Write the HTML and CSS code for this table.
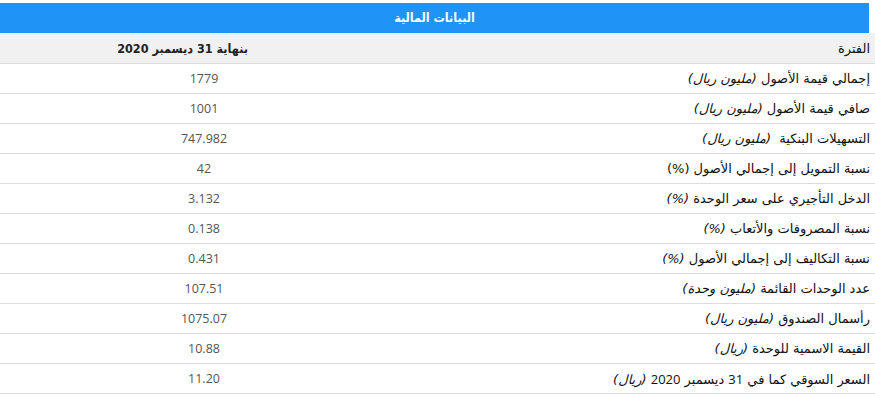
FILE: index.html
```html
<!DOCTYPE html>
<html lang="ar" dir="rtl">
<head>
<meta charset="utf-8">
<title>البيانات المالية</title>
<link rel="stylesheet" href="styles.css">
</head>
<body>
<div class="panel">
  <div class="title">البيانات المالية</div>
  <div class="table">
    <div class="row head"><div class="label">الفترة</div><div class="value head-value">بنهاية 31 ديسمبر 2020</div></div>
    <div class="row"><div class="label">إجمالي قيمة الأصول <i>(مليون ريال)</i></div><div class="value">1779</div></div>
    <div class="row"><div class="label">صافي قيمة الأصول <i>(مليون ريال)</i></div><div class="value">1001</div></div>
    <div class="row"><div class="label">التسهيلات البنكية&nbsp; <i>(مليون ريال)</i></div><div class="value">747.982</div></div>
    <div class="row"><div class="label">نسبة التمويل إلى إجمالي الأصول (%)</div><div class="value">42</div></div>
    <div class="row"><div class="label">الدخل التأجيري على سعر الوحدة <i>(%)</i></div><div class="value">3.132</div></div>
    <div class="row"><div class="label">نسبة المصروفات والأتعاب <i>(%)</i></div><div class="value">0.138</div></div>
    <div class="row"><div class="label">نسبة التكاليف إلى إجمالي الأصول <i>(%)</i></div><div class="value">0.431</div></div>
    <div class="row"><div class="label">عدد الوحدات القائمة <i>(مليون وحدة)</i></div><div class="value">107.51</div></div>
    <div class="row"><div class="label">رأسمال الصندوق <i>(مليون ريال)</i></div><div class="value">1075.07</div></div>
    <div class="row"><div class="label">القيمة الاسمية للوحدة <i>(ريال)</i></div><div class="value">10.88</div></div>
    <div class="row"><div class="label">السعر السوقي كما في <span class="num">31</span> ديسمبر <span class="num">2020</span> <i>(ريال)</i></div><div class="value">11.20</div></div>
  </div>
</div>
</body>
</html>
```
FILE: styles.css
```css
html, body {
  margin: 0;
  padding: 0;
  background: #ffffff;
}
body {
  padding-top: 3px;
  font-family: "DejaVu Sans", sans-serif;
}
.panel {
  width: 875px;
}
.title {
  width: 869px;
  margin-right: 6px;
  height: 30px;
  background: #1f93f6;
  color: #ffffff;
  font-family: "DejaVu Sans Condensed", "DejaVu Sans", sans-serif;
  font-weight: bold;
  font-size: 12.5px;
  line-height: 30px;
  text-align: center;
}
.table {
  display: flex;
  flex-direction: column;
}
.row {
  display: grid;
  grid-template-columns: 1fr 260px;
  height: 29px;
  border-bottom: 1px solid #dcdcdc;
  align-items: center;
}
.row.head {
  height: 30px;
  background: #f1f1f1;
}
.label {
  padding-right: 5px;
  font-size: 13px;
  color: #111;
  white-space: nowrap;
}
.label i {
  font-style: italic;
}
.label .num {
  font-family: "Open Sans", sans-serif;
  font-size: 13px;
}
.value {
  padding-left: 148px;
  text-align: center;
  font-family: "Open Sans", sans-serif;
  font-size: 12.5px;
  color: #555;
}
.head-value {
  padding-left: 0;
  padding-right: 12px;
  text-align: right;
  font-family: "DejaVu Sans Condensed", "DejaVu Sans", sans-serif;
  font-weight: bold;
  font-size: 12.5px;
  color: #222;
}
```
